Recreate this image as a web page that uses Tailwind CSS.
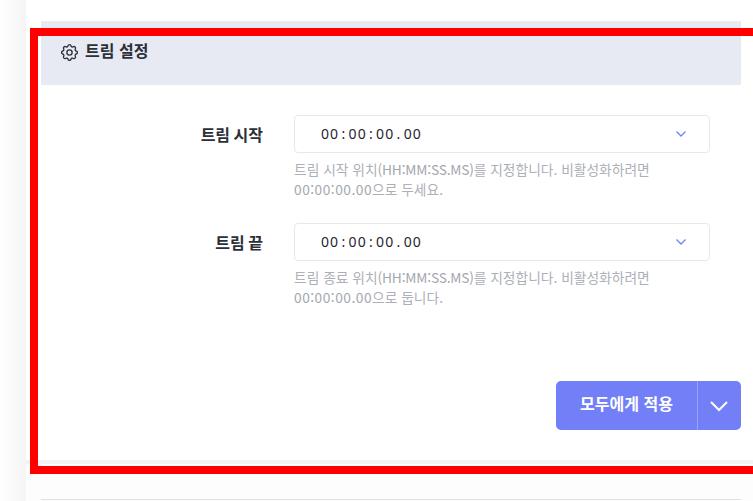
<!DOCTYPE html>
<html lang="ko">
<head>
  <title>Trim settings</title>
  <meta charset="UTF-8">
  <script src="https://cdn.jsdelivr.net/npm/@tailwindcss/browser@4"></script>
</head>
<body class="bg-white">
  <div class="relative w-[753px] h-[501px] overflow-hidden flex bg-[#f7f7f7] font-['Noto_Sans_CJK_KR','Noto_Sans',sans-serif]">
    <!-- left gutter -->
    <div class="w-[26px] shrink-0 bg-gradient-to-r from-white to-[#f5f5f5]"></div>

    <div class="flex-1 flex flex-col bg-white">
      <div class="flex flex-col h-[460px] pt-[21px] pl-[15px] pr-[12px]">
        <!-- header -->
        <div class="h-[64px] bg-[#e7eaf2] flex items-start pt-[18px] pl-[18px] gap-[5px]">
          <svg class="w-[21px] h-[21px] mt-[3px] text-[#2b2f38]" fill="none" stroke="currentColor" stroke-width="1.5" stroke-linecap="round" stroke-linejoin="round" viewBox="0 0 24 24">
            <path d="M10.3 4.3c.4-1.8 3-1.8 3.4 0a1.7 1.7 0 002.6 1.1c1.5-.9 3.3.8 2.4 2.4a1.7 1.7 0 001 2.5c1.8.4 1.8 3 0 3.4a1.7 1.7 0 00-1 2.6c.9 1.5-.9 3.3-2.4 2.4a1.7 1.7 0 00-2.6 1c-.4 1.8-3 1.8-3.4 0a1.7 1.7 0 00-2.6-1c-1.5.9-3.3-.9-2.4-2.4a1.7 1.7 0 00-1-2.6c-1.8-.4-1.8-3 0-3.4a1.7 1.7 0 001-2.5c-.9-1.6.9-3.3 2.4-2.4a1.7 1.7 0 002.6-1.1z"></path>
            <circle cx="12" cy="12" r="3"></circle>
          </svg>
          <span class="text-[16px] leading-[22px] font-bold text-[#2b2f38]">트림 설정</span>
        </div>

        <!-- fields -->
        <div class="flex flex-col pt-[30px] gap-[24px]">
          <div class="flex">
            <label class="w-[253px] pr-[31px] text-right text-[16px] leading-[38px] font-bold text-[#2b2f38] [word-spacing:-1px]">트림 시작</label>
            <div class="w-[416px]">
              <div class="h-[38px] border border-[#e6e8f0] rounded-[4px] flex items-center justify-between pl-[26px] pr-[22px]">
                <span class="font-['Noto_Sans',sans-serif] text-[14px] pb-[2px] tracking-[1.1px] [word-spacing:-2.5px] text-[#1f2430]">00 : 00 : 00 . 00</span>
                <svg class="w-[12px] h-[8px] mb-[1px] text-[#7480f5]" fill="none" stroke="currentColor" stroke-width="1.3" viewBox="0 0 12 8"><path d="M1.5 1.5 6 6l4.5-4.5"></path></svg>
              </div>
              <p class="mt-[6px] text-[13.75px] leading-[20px] text-[#adb0b8]">트림 시작 위치<span class="text-[#a4a7af] tracking-[-0.2px]">(HH:MM:SS.MS)</span>를 지정합니다. 비활성화하려면<br><span class="text-[#a4a7af] tracking-[0.5px]">00:00:00.00</span>으로 두세요.</p>
            </div>
          </div>
          <div class="flex">
            <label class="w-[253px] pr-[31px] text-right text-[16px] leading-[38px] font-bold text-[#2b2f38] [word-spacing:-1px]">트림 끝</label>
            <div class="w-[416px]">
              <div class="h-[38px] border border-[#e6e8f0] rounded-[4px] flex items-center justify-between pl-[26px] pr-[22px]">
                <span class="font-['Noto_Sans',sans-serif] text-[14px] pb-[2px] tracking-[1.1px] [word-spacing:-2.5px] text-[#1f2430]">00 : 00 : 00 . 00</span>
                <svg class="w-[12px] h-[8px] mb-[1px] text-[#7480f5]" fill="none" stroke="currentColor" stroke-width="1.3" viewBox="0 0 12 8"><path d="M1.5 1.5 6 6l4.5-4.5"></path></svg>
              </div>
              <p class="mt-[6px] text-[13.75px] leading-[20px] text-[#adb0b8]">트림 종료 위치<span class="text-[#a4a7af] tracking-[-0.2px]">(HH:MM:SS.MS)</span>를 지정합니다. 비활성화하려면<br><span class="text-[#a4a7af] tracking-[0.5px]">00:00:00.00</span>으로 둡니다.</p>
            </div>
          </div>
        </div>

        <!-- apply button -->
        <div class="mt-auto mb-[30px] self-end flex h-[49px] rounded-[5px] bg-[#727ff6] text-white">
          <button class="w-[142px] text-[16px] font-bold pb-[5px] border-r border-[#9aa3f8]">모두에게 적용</button>
          <button class="w-[43px] flex items-center justify-center">
            <svg class="w-[20px] h-[12px] mr-[1px]" fill="none" stroke="currentColor" stroke-width="2" viewBox="0 0 20 12"><path d="M2 2l8 8 8-8"></path></svg>
          </button>
        </div>
      </div>

      <!-- next card -->
      <div class="flex-1 bg-[#f3f3f3] pt-[4px]">
        <div class="h-full bg-[#fdfdfd] pl-[15px] pr-[12px] pb-[1px] flex flex-col justify-end">
          <div class="h-[1px] bg-[#e0e0e0]"></div>
        </div>
      </div>
    </div>

    <!-- red highlight frame -->
    <div class="absolute left-[30px] top-[28px] w-[740px] h-[446px] border-[8px] border-[#ff0000]"></div>
  </div>
</body>
</html>
